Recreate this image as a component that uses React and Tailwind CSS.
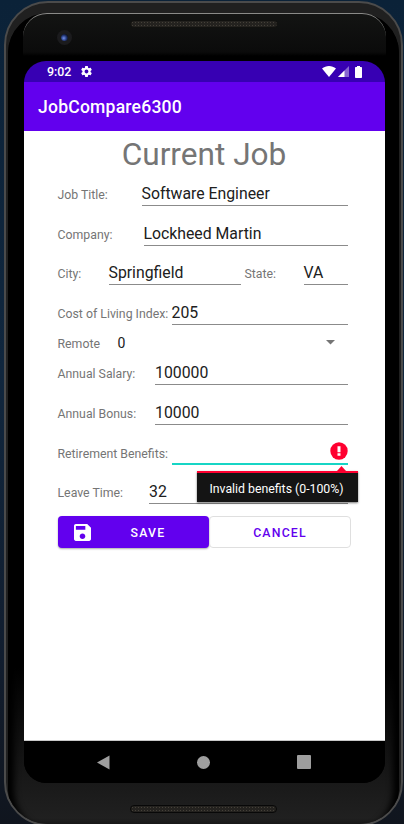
const underline = 'border-b border-[#8b8b8b]';

function Label({ className, children }) {
  return (
    <span className={`shrink-0 whitespace-nowrap pb-[3px] text-[12.3px] leading-[16px] text-[#757575] ${className}`}>
      {children}
    </span>
  );
}

function Field({ className = '', line = underline, children }) {
  return (
    <div className={`h-[24px] whitespace-nowrap text-[15.8px] leading-[24px] text-[#202020] ${line} ${className}`}>
      {children}
    </div>
  );
}

function Row({ label, labelWidth, value, height = 'h-[39.6px]', line }) {
  return (
    <div className={`flex items-end ${height}`}>
      <Label className={labelWidth}>{label}</Label>
      <Field className="flex-1" line={line}>{value}</Field>
    </div>
  );
}

function StatusBar() {
  return (
    <div className="flex h-[21px] items-center bg-[#3700b3] pl-[23px] pr-[23px] text-white">
      <span className="pt-px text-[12.4px] font-medium leading-none">9:02</span>
      <svg className="ml-[9px]" width="13" height="13" viewBox="0 0 24 24" fill="currentColor">
        <path d="M19.43 12.98c.04-.32.07-.64.07-.98s-.03-.66-.07-.98l2.11-1.65c.19-.15.24-.42.12-.64l-2-3.46c-.12-.22-.39-.3-.61-.22l-2.49 1c-.52-.4-1.08-.73-1.69-.98l-.38-2.65C14.46 2.18 14.25 2 14 2h-4c-.25 0-.46.18-.49.42l-.38 2.65c-.61.25-1.17.59-1.69.98l-2.49-1c-.23-.09-.49 0-.61.22l-2 3.46c-.13.22-.07.49.12.64l2.11 1.65c-.04.32-.07.65-.07.98s.03.66.07.98l-2.11 1.65c-.19.15-.24.42-.12.64l2 3.46c.12.22.39.3.61.22l2.49-1c.52.4 1.08.73 1.69.98l.38 2.65c.03.24.24.42.49.42h4c.25 0 .46-.18.49-.42l.38-2.65c.61-.25 1.17-.59 1.69-.98l2.49 1c.23.09.49 0 .61-.22l2-3.46c.12-.22.07-.49-.12-.64l-2.11-1.65zM12 15.5c-1.93 0-3.5-1.57-3.5-3.5s1.57-3.5 3.5-3.5 3.5 1.57 3.5 3.5-1.57 3.5-3.5 3.5z" />
      </svg>
      <svg className="ml-auto" width="14" height="11" viewBox="0 0 14 11" fill="currentColor">
        <path d="M0 2.6C4-.8 10-.8 14 2.6L7 11z" />
      </svg>
      <svg className="ml-[2px]" width="11" height="11" viewBox="0 0 11 11" fill="currentColor">
        <path d="M11 0v11H0z" opacity=".4" />
        <path d="M6.5 4.5V11H0z" />
      </svg>
      <svg className="ml-[6px]" width="7" height="12" viewBox="0 0 7 12" fill="currentColor">
        <path d="M2 0h3v1h1.200q.8 0 .8.8v9.400q0 .8-.8.8H.8Q0 12 0 11.200V1.800Q0 1 .8 1H2z" />
      </svg>
    </div>
  );
}

function ErrorTip() {
  return (
    <div className="absolute right-[-10px] top-[1px] z-10 flex w-[161px] flex-col items-end">
      <svg className="mr-[12px]" width="9" height="5" viewBox="0 0 9 5">
        <path d="M4.500 0L9 5H0z" fill="#ff0030" />
      </svg>
      <div className="h-[31px] w-full border-t-2 border-[#ff0030] bg-[#141414] pr-px text-center text-[12.3px] leading-[32px] text-white shadow-[0_1px_2px_#0008]">
        Invalid benefits (0-100%)
      </div>
    </div>
  );
}

function Form() {
  return (
    <div className="flex h-[610px] flex-col border-b border-[#c8c8c8] bg-white pl-[33.500px] pr-[37.500px]">
      <h1 className="mr-[-3px] h-[35.500px] whitespace-nowrap text-center text-[31.600px] leading-[47px] text-[#757575]">Current Job</h1>
      <Row label="Job Title:" labelWidth="w-[84px]" value="Software Engineer" />
      <Row label="Company:" labelWidth="w-[86px]" value="Lockheed Martin" />
      <div className="flex h-[39.6px] items-end">
        <Label className="w-[51px]">City:</Label>
        <Field className="w-[132px]">Springfield</Field>
        <Label className="ml-[4px] w-[59px]">State:</Label>
        <Field className="flex-1">VA</Field>
      </div>
      <Row label="Cost of Living Index:" labelWidth="w-[114px]" value="205" />
      <div className="flex h-[36px] items-center pt-[2px]">
        <span className="w-[60px] text-[12.3px] text-[#757575]">Remote</span>
        <span className="text-[14px] text-[#202020]">0</span>
        <svg className="ml-auto mr-[13px] mt-[-2px]" width="9" height="5" viewBox="0 0 9 5">
          <path d="M0 0h9L4.500 4.500z" fill="#757575" />
        </svg>
      </div>
      <Row label="Annual Salary:" labelWidth="w-[97.500px]" value="100000" height="h-[24.600px]" />
      <Row label="Annual Bonus:" labelWidth="w-[97.500px]" value="10000" />
      <div className="flex h-[39.6px] items-end">
        <Label className="w-[114px]">Retirement Benefits:</Label>
        <Field className="flex flex-1 justify-end" line="border-b-2 border-[#16d5c5]">
          <svg className="mt-[1px]" width="18" height="18" viewBox="0 0 18 18">
            <circle cx="9" cy="9" r="8.700" fill="#ff0030" />
            <path d="M7.500 4.300h3v6h-3zM7.500 11.300h3v2.500h-3z" fill="white" />
          </svg>
        </Field>
      </div>
      <div className="relative">
        <Row label="Leave Time:" labelWidth="w-[91.500px]" value="32" />
        <ErrorTip />
      </div>
      <div className="mr-[-3.500px] mt-[12px] flex h-[31.500px] text-[12.3px] font-medium tracking-[1.200px]">
        <button className="flex w-[151.500px] items-center rounded-[4px] bg-[#6200ee] pl-[16px] text-white shadow-[0_1px_2px_#0005]">
          <svg width="17" height="17" viewBox="3 3 18 18" fill="currentColor">
            <path d="M17 3H5c-1.110 0-2 .9-2 2v14c0 1.100.89 2 2 2h14c1.100 0 2-.9 2-2V7l-4-4zm-5 16c-1.660 0-3-1.340-3-3s1.340-3 3-3 3 1.340 3 3-1.340 3-3 3zm3-10H5V5h10v4z" />
          </svg>
          <span className="ml-[40px] pt-[2px]">SAVE</span>
        </button>
        <button className="flex-1 rounded-[4px] border border-[#dfdfdf] pt-[2px] text-[#6200ee]">CANCEL</button>
      </div>
    </div>
  );
}

function NavBar() {
  return (
    <div className="flex h-[42px] items-center justify-between bg-black pl-[73px] pr-[74px]">
      <svg width="13" height="15" viewBox="0 0 13 15">
        <path d="M12.500 .5v14L0 7.500z" fill="#9e9e9e" />
      </svg>
      <div className="h-[13px] w-[13px] rounded-full bg-[#9e9e9e]" />
      <div className="h-[14px] w-[14px] rounded-[1px] bg-[#9e9e9e]" />
    </div>
  );
}

const grille =
  'rounded-full bg-[#24221f] bg-[radial-gradient(circle,#454139_35%,transparent_45%)] bg-[length:3px_3px]';

export default function App() {
  return (
    <div className="h-[824px] w-[404px] overflow-hidden bg-[linear-gradient(#0b2238,#10263d_45%,#111d2e_80%,#10151e)] font-[Roboto,sans-serif]">
      <div className="ml-[4px] mt-[1px] h-[825px] w-[399px] overflow-hidden rounded-[44px] border-2 border-[#4b4b4b] bg-[#202020] p-[2px]">
        <div className="h-full w-full rounded-[40px] bg-[linear-gradient(#000_0px,#000_650px,#171717_760px,#202020_805px,#080808_822px)] pl-[16px] shadow-[inset_9px_0_6px_-3px_#000,inset_-9px_0_6px_-3px_#000]">
          <div className="ml-[-1px] mr-[13px] mt-[8px] flex h-[48px] rounded-t-[24px] border-t border-[#8a8a88] bg-[linear-gradient(#131413,#0b0b0b_38px,#000_42px)]">
            <div className="ml-[34px] mt-[16px] flex h-[15px] w-[15px] items-center justify-center rounded-full bg-[#1b1b1d]">
              <div className="h-[7px] w-[7px] rounded-full bg-[radial-gradient(circle_at_40%_60%,#7290ed,#253979_45%,#0b1020_75%)]" />
            </div>
            <div className={`ml-[58px] mt-[6px] h-[8px] w-[148px] border border-[#11110f] ${grille}`} />
          </div>
          <div className="h-[722px] w-[361px] overflow-hidden rounded-[22px] bg-black">
            <StatusBar />
            <div className="flex h-[49px] items-center bg-[#6200ee] pl-[14px] pt-[2px] text-[17.560px] font-medium tracking-[0.220px] text-white">
              JobCompare6300
            </div>
            <Form />
            <NavBar />
          </div>
          <div className={`ml-[106px] mt-[22px] h-[8px] w-[147px] border border-[#080808] ${grille}`} />
        </div>
      </div>
    </div>
  );
}
